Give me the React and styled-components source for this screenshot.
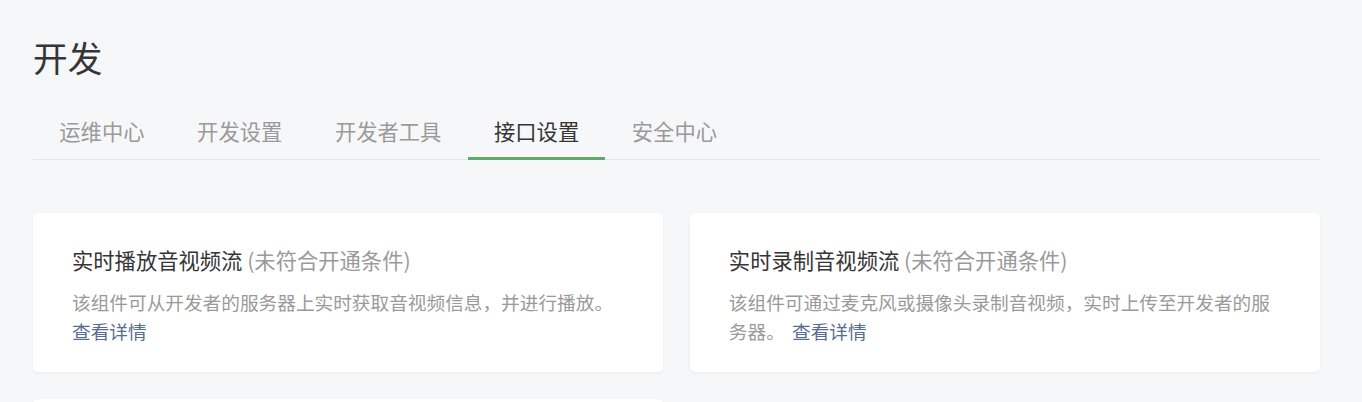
import React from "react";
import styled, { createGlobalStyle } from "styled-components";

const GlobalStyle = createGlobalStyle`
  html, body {
    margin: 0;
    padding: 0;
    background: #f6f7f9;
  }
  body {
    font-family: "Noto Sans CJK SC", "Noto Sans", "Liberation Sans", sans-serif;
    color: #353535;
  }
`;

const Page = styled.div`
  padding: 33px 42px 0 33px;
  overflow: hidden;
  height: 402px;
  box-sizing: border-box;
`;

const Heading = styled.h1`
  margin: 0;
  font-size: 34.7px;
  line-height: 48px;
  font-weight: 400;
  color: #353535;
`;

const TabBar = styled.nav`
  display: flex;
  align-items: flex-end;
  margin-top: 24px;
  border-bottom: 1px solid #e5e6ea;
`;

const Tab = styled.div`
  padding: 0 26.3px;
  font-size: 21.3px;
  line-height: 52px;
  color: ${props => (props.active ? "#353535" : "#9a9a9a")};
  border-bottom: 3px solid ${props => (props.active ? "#63a96b" : "transparent")};
  margin-bottom: -1px;
  cursor: pointer;
`;

const Grid = styled.div`
  display: grid;
  grid-template-columns: 1fr 1fr;
  gap: 26.7px;
  margin-top: 53px;
`;

const Card = styled.div`
  background: #fff;
  border-radius: 5px;
  box-shadow: 0 1px 3px rgba(0, 0, 0, 0.06);
  padding: 32px 40px 26px 39px;
  min-height: 159px;
  box-sizing: border-box;
`;

const CardTitle = styled.div`
  font-size: 21.3px;
  line-height: 29px;
  color: #353535;
`;

const Status = styled.span`
  color: #9a9a9a;
`;

const Desc = styled.p`
  margin: 13px 0 0;
  font-size: 18.67px;
  line-height: 29.3px;
  color: #9a9a9a;
  word-spacing: 3px;
`;

const DetailLink = styled.a`
  color: #576b95;
  text-decoration: none;
  cursor: pointer;
`;

const tabs = ["运维中心", "开发设置", "开发者工具", "接口设置", "安全中心"];

const cards = [
  {
    title: "实时播放音视频流",
    desc: "该组件可从开发者的服务器上实时获取音视频信息，并进行播放。",
  },
  {
    title: "实时录制音视频流",
    desc: "该组件可通过麦克风或摄像头录制音视频，实时上传至开发者的服务器。",
  },
  {
    title: "直播组件",
    desc: "该组件可在小程序中展示直播内容。",
  },
];

export default function App() {
  return (
    <>
      <GlobalStyle />
      <Page>
        <Heading>开发</Heading>
        <TabBar>
          {tabs.map(t => (
            <Tab key={t} active={t === "接口设置"}>
              {t}
            </Tab>
          ))}
        </TabBar>
        <Grid>
          {cards.map(c => (
            <Card key={c.title}>
              <CardTitle>
                {c.title} <Status>(未符合开通条件)</Status>
              </CardTitle>
              <Desc>
                {c.desc} <DetailLink>查看详情</DetailLink>
              </Desc>
            </Card>
          ))}
        </Grid>
      </Page>
    </>
  );
}
